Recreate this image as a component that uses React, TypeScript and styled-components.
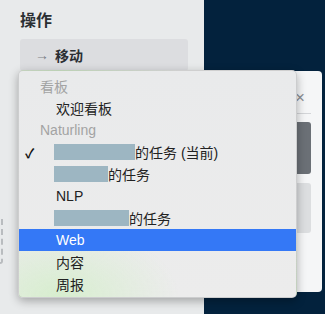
import React from 'react';
import styled, { createGlobalStyle } from 'styled-components';

const GlobalStyle = createGlobalStyle`
  html, body {
    margin: 0;
    padding: 0;
    width: 325px;
    height: 314px;
    overflow: hidden;
    font-family: "Liberation Sans", "Noto Sans CJK SC", sans-serif;
  }
`;

const Page = styled.div`
  position: relative;
  display: flex;
  width: 325px;
  height: 314px;
  background: #03223d;
`;

const Sidebar = styled.div`
  position: relative;
  width: 204px;
  padding: 11px 16px 0 20px;
  box-sizing: border-box;
  background: #e8eaeb;
  display: flex;
  flex-direction: column;
  gap: 8px;
`;

const Heading = styled.h3`
  margin: 0;
  font-size: 16px;
  line-height: 20px;
  font-weight: 700;
  color: #2b2f33;
`;

const ActionButton = styled.div`
  display: flex;
  align-items: center;
  gap: 6px;
  height: 32px;
  padding-left: 15px;
  border-radius: 3px;
  background: #dcdde0;
  font-size: 14px;
  font-weight: 700;
  color: #2b2f33;
`;

const Arrow = styled.span`
  color: #7d8187;
  font-weight: 400;
`;

const DashedBox = styled.div`
  position: absolute;
  left: -20px;
  top: 216px;
  width: 23px;
  height: 48px;
  border: 2px dashed #b9bcbf;
  border-radius: 3px;
  box-sizing: border-box;
`;

const Dialog = styled.div`
  position: absolute;
  left: 200px;
  top: 71px;
  width: 122px;
  height: 221px;
  background: #f5f6f7;
  border-radius: 4px;
  display: flex;
  flex-direction: column;
  align-items: flex-end;
  padding: 18px 11px 0 0;
  box-sizing: border-box;
`;

const Close = styled.span`
  font-size: 17px;
  line-height: 18px;
  color: #8a8e93;
  margin-right: 6px;
`;

const Rule = styled.div`
  width: 100%;
  height: 1px;
  background: #d3d5d8;
  margin: 6px 0 8px;
`;

const Block = styled.div<{ $dark?: boolean; $h: number }>`
  width: 100%;
  height: ${(p) => p.$h}px;
  border-radius: 3px;
  background: ${(p) => (p.$dark ? '#6b7076' : '#dcdee0')};
  margin-bottom: 9px;
`;

const Menu = styled.div`
  position: absolute;
  left: 18px;
  top: 70px;
  width: 279px;
  height: 228px;
  box-sizing: border-box;
  padding: 4px 0;
  border-radius: 5px;
  border: 1px solid rgba(0, 0, 0, 0.12);
  background:
    radial-gradient(ellipse 120px 70px at 40px 225px, rgba(214, 238, 205, 0.95), rgba(214, 238, 205, 0) 100%),
    linear-gradient(#e9eaeb, #ececec);
  box-shadow: 0 3px 10px rgba(0, 0, 0, 0.3);
  font-size: 14px;
  overflow: hidden;
`;

const Row = styled.div<{ $kind?: 'group' | 'active' }>`
  position: relative;
  display: flex;
  align-items: center;
  height: 22px;
  padding-left: ${(p) => (p.$kind === 'group' ? 21 : 37)}px;
  color: ${(p) => (p.$kind === 'group' ? '#a3a3a3' : p.$kind === 'active' ? '#ffffff' : '#222222')};
  background: ${(p) => (p.$kind === 'active' ? '#3478f6' : 'transparent')};
  white-space: nowrap;
`;

const Check = styled.span`
  position: absolute;
  left: 6px;
  font-size: 13px;
  font-weight: 700;
  color: #111;
`;

const Redacted = styled.span<{ $w: number }>`
  display: inline-block;
  width: ${(p) => p.$w}px;
  height: 16px;
  margin-left: -2px;
  background: #9db6c2;
`;

type Item = { label: string; kind?: 'group' | 'active'; hidden?: number; checked?: boolean };

const items: Item[] = [
  { label: '看板', kind: 'group' },
  { label: '欢迎看板' },
  { label: 'Naturling', kind: 'group' },
  { label: '的任务 (当前)', hidden: 81, checked: true },
  { label: '的任务', hidden: 54 },
  { label: 'NLP' },
  { label: '的任务', hidden: 75 },
  { label: 'Web', kind: 'active' },
  { label: '内容' },
  { label: '周报' },
];

export default function App() {
  return (
    <>
      <GlobalStyle />
      <Page>
        <Sidebar>
          <Heading>操作</Heading>
          <ActionButton>
            <Arrow>→</Arrow>
            移动
          </ActionButton>
          <DashedBox />
        </Sidebar>
        <Dialog>
          <Close>×</Close>
          <Rule />
          <Block $dark $h={52} />
          <Block $h={50} />
        </Dialog>
        <Menu>
          {items.map((it, i) => (
            <Row key={i} $kind={it.kind}>
              {it.checked && <Check>✓</Check>}
              {it.hidden && <Redacted $w={it.hidden} />}
              {it.label}
            </Row>
          ))}
        </Menu>
      </Page>
    </>
  );
}
